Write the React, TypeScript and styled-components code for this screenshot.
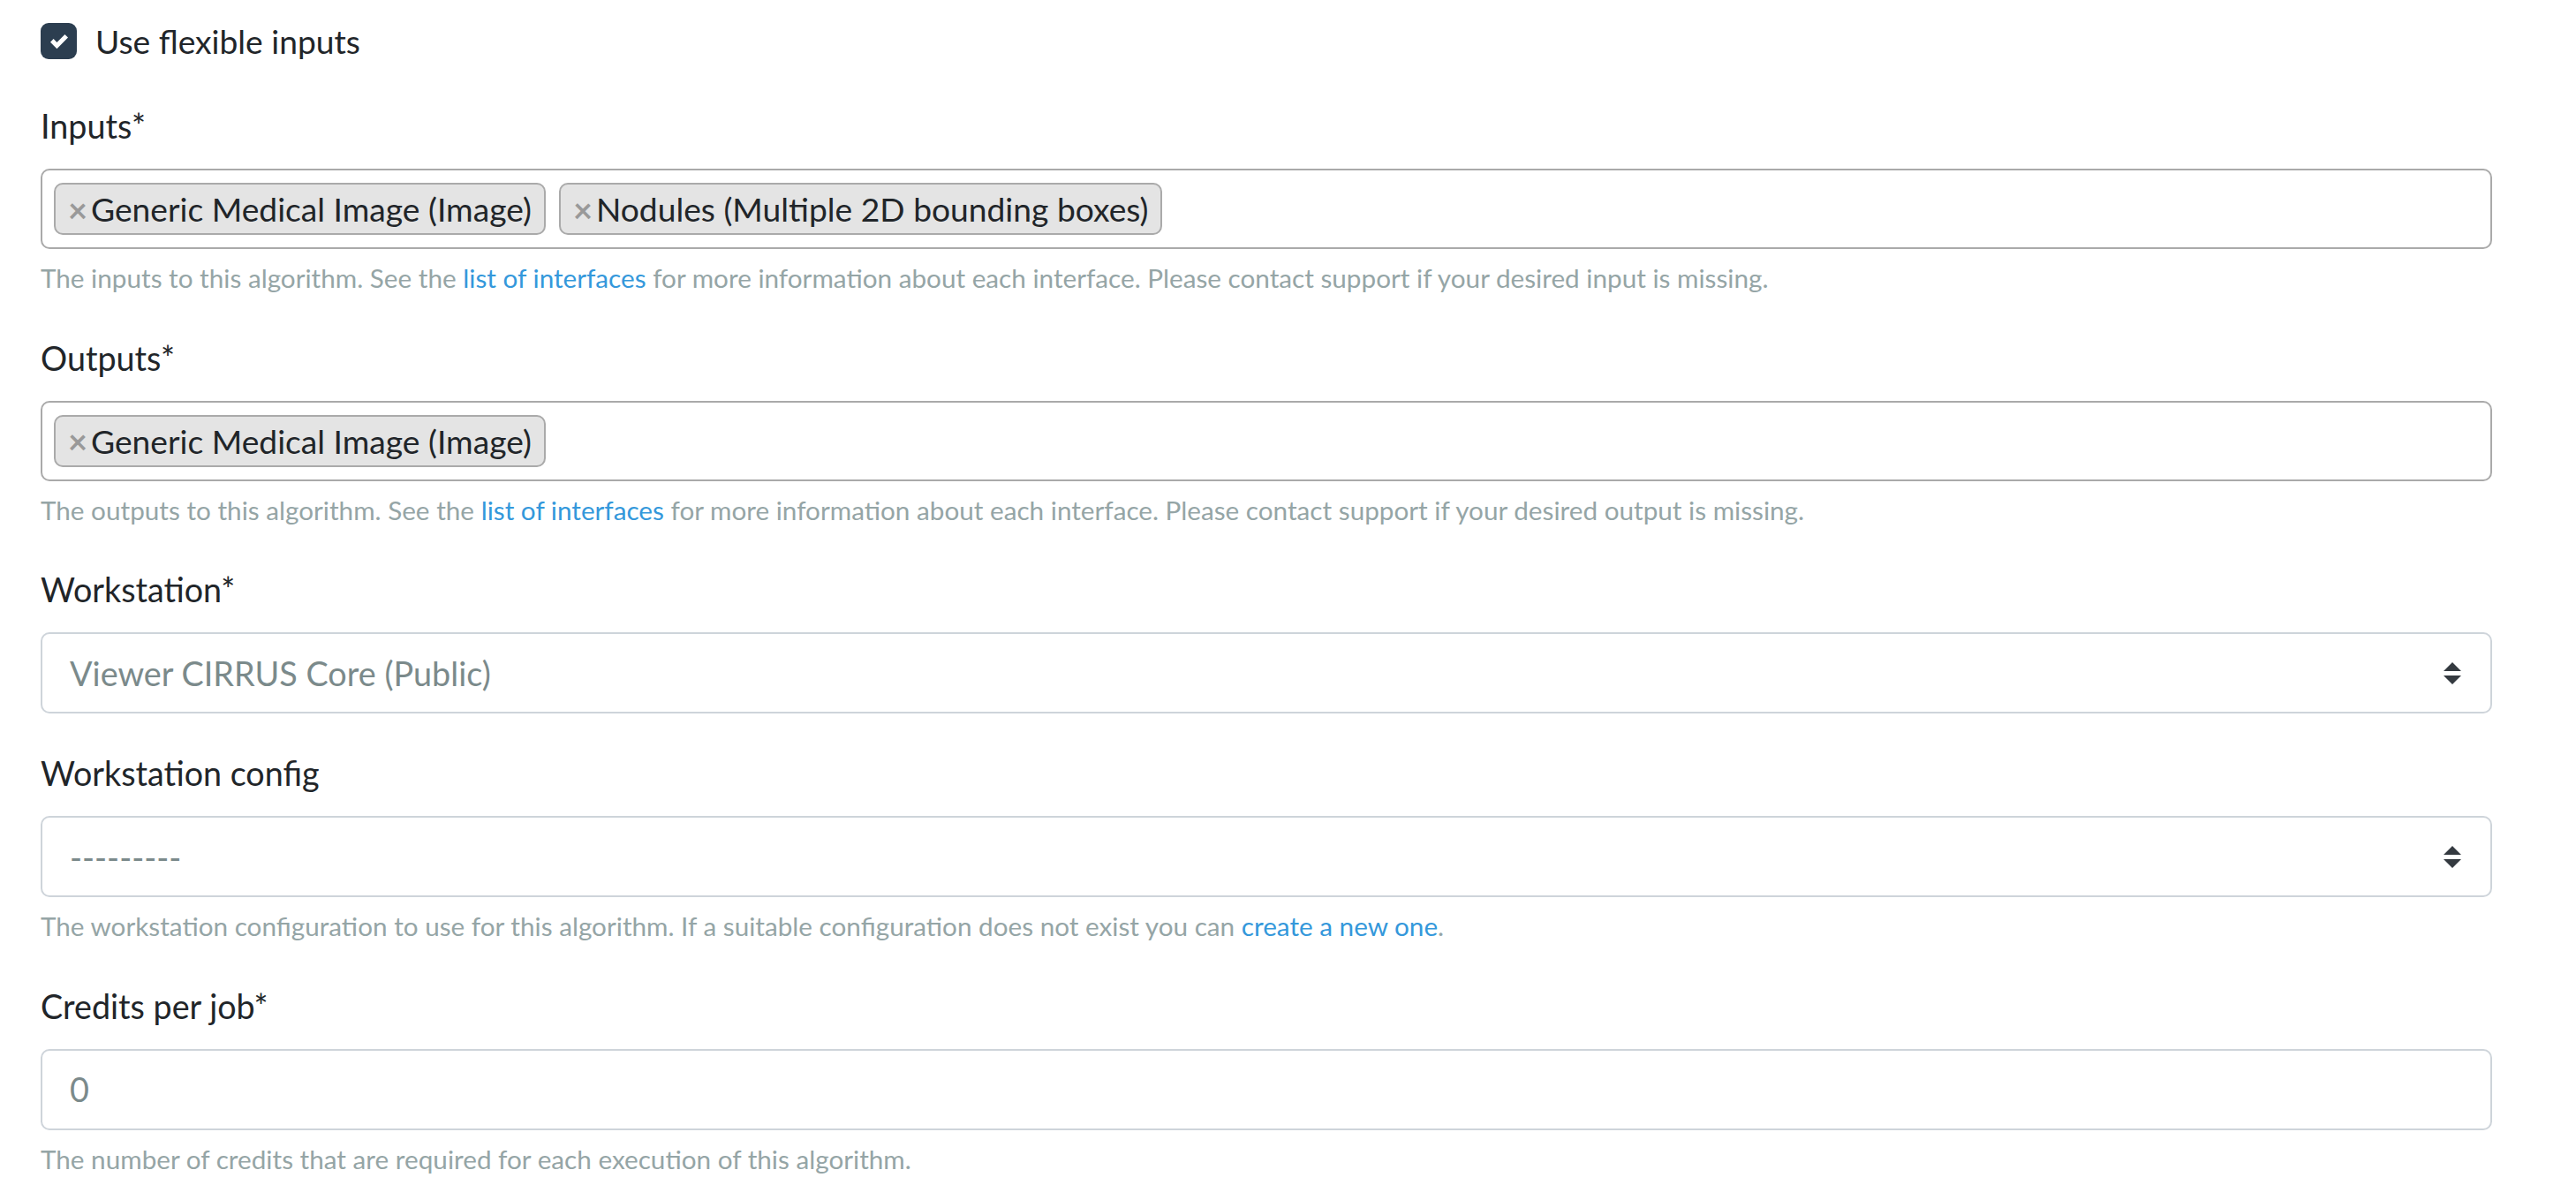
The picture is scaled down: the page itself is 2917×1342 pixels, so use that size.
import React from "react";
import styled, { createGlobalStyle } from "styled-components";

const GlobalStyle = createGlobalStyle`
  html, body { margin: 0; padding: 0; background: #ffffff; }
  body {
    font-family: Lato, "Open Sans", "Liberation Sans", sans-serif;
    color: #212529;
    -webkit-font-smoothing: antialiased;
  }
  * { box-sizing: border-box; }
`;

const Page = styled.main`
  padding: 18px 0 0 46px;
`;

const Form = styled.form`
  width: 2776px;
  display: flex;
  flex-direction: column;
  gap: 39px;
`;

const Group = styled.div`
  display: flex;
  flex-direction: column;
`;

const CheckRow = styled.label`
  display: flex;
  align-items: center;
  gap: 21px;
  font-size: 37.2px;
  line-height: 57px;
  color: #212529;
`;

const CheckBox = styled.span`
  width: 41px;
  height: 41px;
  border-radius: 9px;
  background: #2c3e50;
  display: flex;
  align-items: center;
  justify-content: center;
  flex: none;
`;

const Label = styled.label`
  font-size: 37.7px;
  line-height: 57px;
  color: #212529;
  margin-bottom: 20px;
`;

const TagBox = styled.div`
  min-height: 91px;
  border: 2px solid #aaaaaa;
  border-radius: 10px;
  background: #fff;
  display: flex;
  align-items: center;
  flex-wrap: wrap;
  gap: 15px;
  padding: 0 13px;
`;

const Tag = styled.span`
  height: 59px;
  display: inline-flex;
  align-items: center;
  background: #e4e4e4;
  border: 2px solid #aaaaaa;
  border-radius: 10px;
  padding: 0 14px 0 14px;
  font-size: 37.2px;
  color: #212529;
  white-space: nowrap;
`;

const Remove = styled.span`
  color: #999999;
  font-weight: 700;
  font-size: 38px;
  margin-right: 4px;
  line-height: 1;
`;

const Help = styled.small`
  display: block;
  margin-top: 10px;
  font-size: 29.7px;
  line-height: 45.6px;
  color: #95a5a6;
`;

const Link = styled.a`
  color: #3498db;
  text-decoration: none;
`;

const Control = styled.div`
  height: 92px;
  border: 2px solid #ced4da;
  border-radius: 10px;
  background: #fff;
  display: flex;
  align-items: center;
  justify-content: space-between;
  padding: 0 33px 0 31px;
  font-size: 37.8px;
  color: #7b8a8b;
`;

const Arrows = () => (
  <svg width="20" height="25" viewBox="0 0 4 5" aria-hidden="true">
    <path d="M2 0L0 2h4zm0 5L0 3h4z" fill="#343a40" />
  </svg>
);

const Check = () => (
  <svg width="20" height="20" viewBox="0 0 8 8" aria-hidden="true">
    <path
      fill="#ffffff"
      d="M6.564.75l-3.59 3.612-1.538-1.55L0 4.26 2.974 7.25 8 2.193z"
    />
  </svg>
);

const TagField: React.FC<{ tags: string[] }> = ({ tags }) => (
  <TagBox>
    {tags.map((t) => (
      <Tag key={t}>
        <Remove>×</Remove>
        {t}
      </Tag>
    ))}
  </TagBox>
);

export default function App() {
  return (
    <>
      <GlobalStyle />
      <Page>
        <Form onSubmit={(e) => e.preventDefault()}>
          <CheckRow>
            <CheckBox>
              <Check />
            </CheckBox>
            Use flexible inputs
          </CheckRow>

          <Group>
            <Label>Inputs*</Label>
            <TagField
              tags={[
                "Generic Medical Image (Image)",
                "Nodules (Multiple 2D bounding boxes)",
              ]}
            />
            <Help>
              The inputs to this algorithm. See the{" "}
              <Link href="#">list of interfaces</Link> for more information
              about each interface. Please contact support if your desired input
              is missing.
            </Help>
          </Group>

          <Group>
            <Label>Outputs*</Label>
            <TagField tags={["Generic Medical Image (Image)"]} />
            <Help>
              The outputs to this algorithm. See the{" "}
              <Link href="#">list of interfaces</Link> for more information
              about each interface. Please contact support if your desired
              output is missing.
            </Help>
          </Group>

          <Group>
            <Label>Workstation*</Label>
            <Control>
              <span>Viewer CIRRUS Core (Public)</span>
              <Arrows />
            </Control>
          </Group>

          <Group>
            <Label>Workstation config</Label>
            <Control>
              <span>---------</span>
              <Arrows />
            </Control>
            <Help>
              The workstation configuration to use for this algorithm. If a
              suitable configuration does not exist you can{" "}
              <Link href="#">create a new one</Link>.
            </Help>
          </Group>

          <Group>
            <Label>Credits per job*</Label>
            <Control>
              <span>0</span>
            </Control>
            <Help>
              The number of credits that are required for each execution of
              this algorithm.
            </Help>
          </Group>
        </Form>
      </Page>
    </>
  );
}
